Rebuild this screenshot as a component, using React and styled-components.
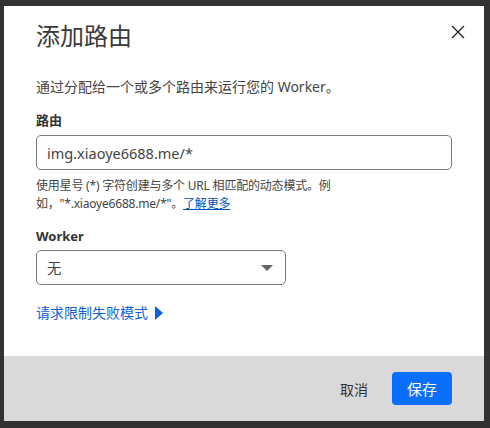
import styled, { createGlobalStyle } from "styled-components";

const Global = createGlobalStyle`
  html, body {
    margin: 0;
    padding: 0;
    background: #333333;
  }
  body {
    font-family: "Noto Sans", "Noto Sans CJK SC", sans-serif;
  }
`;

const Backdrop = styled.div`
  width: 490px;
  height: 428px;
  padding: 6px 6px 0 4px;
  box-sizing: border-box;
  background: #323232;
`;

const Modal = styled.div`
  width: 480px;
  height: 415px;
  background: #fff;
  display: flex;
  flex-direction: column;
  position: relative;
`;

const Body = styled.div`
  flex: 1;
  padding: 12px 32px 0 32px;
  display: flex;
  flex-direction: column;
`;

const Title = styled.h2`
  margin: 0;
  font-size: 24px;
  font-weight: 400;
  line-height: 36px;
  color: #3a3a3a;
`;

const CloseButton = styled.button`
  position: absolute;
  top: 16px;
  right: 16px;
  width: 20px;
  height: 20px;
  padding: 0;
  border: none;
  background: none;
  display: flex;
  align-items: center;
  justify-content: center;
`;

const Description = styled.p`
  margin: 23px 0 0;
  font-size: 14px;
  line-height: 20px;
  color: #444;
`;

const Label = styled.div`
  margin-top: ${(p) => p.$top}px;
  font-size: 13px;
  font-weight: 700;
  line-height: 18px;
  color: #333;
`;

const Field = styled.div`
  margin-top: ${(p) => p.$gap}px;
  width: ${(p) => p.$width}px;
  height: 35px;
  box-sizing: border-box;
  border: 1px solid #7a7a7a;
  border-radius: 5px;
  display: flex;
  align-items: center;
  justify-content: space-between;
  padding: 0 12px 0 10px;
  font-size: 14.5px;
  color: #444;
`;

const Caret = styled.span`
  width: 0;
  height: 0;
  border-left: 6px solid transparent;
  border-right: 6px solid transparent;
  border-top: 6px solid #666;
`;

const Help = styled.p`
  margin: 7px 0 0;
  font-size: 12px;
  line-height: 18px;
  letter-spacing: -0.2px;
  color: #444;
`;

const Link = styled.a`
  color: #0051c3;
  text-decoration: underline;
`;

const Toggle = styled.div`
  margin-top: 18px;
  display: flex;
  align-items: center;
  gap: 6px;
  font-size: 14px;
  line-height: 20px;
  color: #0b62d6;
`;

const Footer = styled.div`
  height: 65px;
  background: #d9d9d9;
  display: flex;
  align-items: center;
  justify-content: flex-end;
  padding: 0 32px;
  gap: 24px;
`;

const TextButton = styled.button`
  border: none;
  background: none;
  padding: 0;
  font-family: inherit;
  font-size: 14px;
  color: #333;
`;

const PrimaryButton = styled.button`
  width: 60px;
  height: 33px;
  border: none;
  border-radius: 4px;
  background: #0a6ffd;
  color: #fff;
  font-family: inherit;
  font-size: 15px;
`;

export default function App() {
  return (
    <>
      <Global />
      <Backdrop>
        <Modal>
          <CloseButton aria-label="关闭">
            <svg width="14" height="14" viewBox="0 0 14 14">
              <path d="M1 1L13 13M13 1L1 13" stroke="#222" strokeWidth="1.3" />
            </svg>
          </CloseButton>
          <Body>
            <Title>添加路由</Title>
            <Description>通过分配给一个或多个路由来运行您的 Worker。</Description>
            <Label $top={14}>路由</Label>
            <Field $width={416} $gap={6}>img.xiaoye6688.me/*</Field>
            <Help>
              使用星号 (*) 字符创建与多个 URL 相匹配的动态模式。例
              <br />
              如，"*.xiaoye6688.me/*"。<Link href="#">了解更多</Link>
            </Help>
            <Label $top={14}>Worker</Label>
            <Field $width={250} $gap={5}>
              无
              <Caret />
            </Field>
            <Toggle>
              请求限制失败模式
              <svg width="10" height="14" viewBox="0 0 10 14">
                <path d="M1 0L9 7L1 14Z" fill="#0b62d6" />
              </svg>
            </Toggle>
          </Body>
          <Footer>
            <TextButton>取消</TextButton>
            <PrimaryButton>保存</PrimaryButton>
          </Footer>
        </Modal>
      </Backdrop>
    </>
  );
}
